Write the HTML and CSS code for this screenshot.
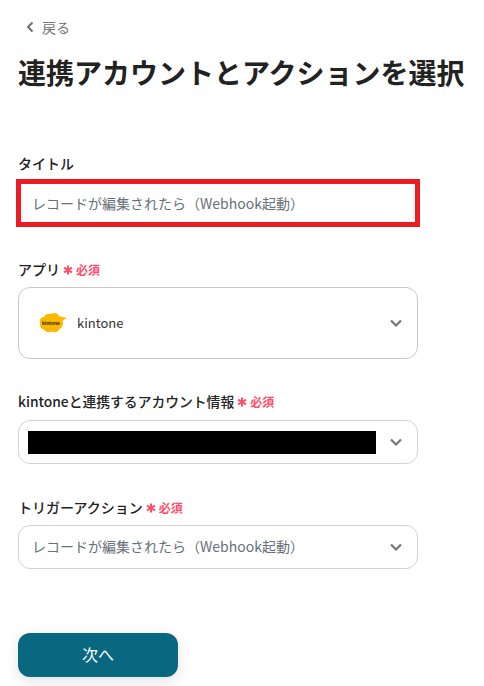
FILE: index.html
```html
<!DOCTYPE html>
<html lang="ja">
<head>
    <meta charset="UTF-8">
    <title>連携アカウントとアクションを選択</title>
    <link rel="stylesheet" href="styles.css">
</head>
<body>
    <div id='wrap'>
        <a class='back'>
            <svg class='back-icon' width="10" height="12" viewBox="0 0 10 12"><path d="M7.5 1.5L3 6l4.500 4.500" fill="none" stroke="#6f6f6f" stroke-width="2"/></svg>
            <span>戻る</span>
        </a>
        <h1 class='page-title'>連携アカウントとアクションを選択</h1>

        <div class='field field-title'>
            <div class='label'>タイトル</div>
            <div class='title-box'>レコードが編集されたら（Webhook起動）</div>
        </div>

        <div class='field field-app'>
            <div class='label'>アプリ
                <svg class='req-mark' width="10" height="10" viewBox="0 0 10 10"><path d="M5 .5v9M1 2.700L9 7.300M9 2.700L1 7.300" stroke="#ff4d6d" stroke-width="2"/></svg>
                <span class='req'>必須</span>
            </div>
            <div class='select select-app'>
                <svg class='logo' width="28" height="22" viewBox="0 0 28 22">
                    <path d="M1 11C0 8 2 5 5 5C6 2 10 1 12 2C15 0 19 1 20 4C22 4.500 25 5.500 28 6C26 7 24.500 8 23.500 9C25 12 23 16 21 16.500C20 20 15 21 13 19.500C10 21 6 20 5 17.500C2 17 0.500 13.500 1 11Z" fill="#fdb900"/>
                    <text x="3" y="12.500" class='logo-text'>kintone</text>
                </svg>
                <span class='select-text dark'>kintone</span>
                <svg class='chevron' width="14" height="10" viewBox="0 0 14 10"><path d="M2 2.500L7 7.500L12 2.500" fill="none" stroke="#757575" stroke-width="2.200"/></svg>
            </div>
        </div>

        <div class='field field-account'>
            <div class='label label-account'>kintoneと連携するアカウント情報
                <svg class='req-mark' width="10" height="10" viewBox="0 0 10 10"><path d="M5 .5v9M1 2.700L9 7.300M9 2.700L1 7.300" stroke="#ff4d6d" stroke-width="2"/></svg>
                <span class='req'>必須</span>
            </div>
            <div class='select select-account'>
                <div class='masked'></div>
                <svg class='chevron' width="14" height="10" viewBox="0 0 14 10"><path d="M2 2.500L7 7.500L12 2.500" fill="none" stroke="#757575" stroke-width="2.200"/></svg>
            </div>
        </div>

        <div class='field field-action'>
            <div class='label'>トリガーアクション
                <svg class='req-mark' width="10" height="10" viewBox="0 0 10 10"><path d="M5 .5v9M1 2.700L9 7.300M9 2.700L1 7.300" stroke="#ff4d6d" stroke-width="2"/></svg>
                <span class='req'>必須</span>
            </div>
            <div class='select select-action'>
                <span class='select-text'>レコードが編集されたら（Webhook起動）</span>
                <svg class='chevron' width="14" height="10" viewBox="0 0 14 10"><path d="M2 2.500L7 7.500L12 2.500" fill="none" stroke="#757575" stroke-width="2.200"/></svg>
            </div>
        </div>

        <button class='next-btn'>次へ</button>
    </div>
</body>
</html>
```

FILE: styles.css
```css
html, body{
    margin: 0;
    padding: 0;
    background-color: #fff;
}
body{
    font-family: "Noto Sans CJK JP", "Noto Sans", sans-serif;
    color: #222;
}
#wrap{
    width: 484px;
    height: 686px;
    overflow: hidden;
    padding: 17px 0 0 18px;
    box-sizing: border-box;
}
.back{
    display: flex;
    align-items: center;
    gap: 7px;
    height: 20px;
    padding-left: 7px;
    font-size: 14px;
    color: #757575;
}
.page-title{
    margin: 11px 0 0;
    font-size: 28px;
    line-height: 48px;
    font-weight: 700;
    white-space: nowrap;
}
.field-title{
    margin-top: 57px;
}
.field-app{
    margin-top: 32px;
}
.field-account{
    margin-top: 32px;
}
.field-action{
    margin-top: 33px;
}
.label{
    display: flex;
    align-items: center;
    height: 20px;
    font-size: 14px;
    font-weight: 500;
    white-space: nowrap;
}
.label-account{
    font-size: 13.800px;
}
.req-mark{
    margin-left: 3px;
    margin-top: 2px;
}
.req{
    margin-left: 3px;
    font-size: 12px;
    font-weight: 700;
    color: #ff4d6d;
}
.title-box{
    width: 404px;
    height: 48px;
    margin: 6px 0 0 -2px;
    padding-left: 11px;
    box-sizing: border-box;
    border: 5px solid #ed1c24;
    display: flex;
    align-items: center;
    font-size: 14px;
    color: #666f7a;
}
.select{
    width: 400px;
    margin-top: 8px;
    box-sizing: border-box;
    border: 1px solid #cfd3da;
    border-radius: 12px;
    display: flex;
    align-items: center;
    font-size: 14px;
    color: #666f7a;
}
.select-app{
    height: 72px;
    padding-left: 20px;
    border-color: #c8c8c8;
}
.select-account{
    height: 44px;
    margin-top: 9px;
    padding-left: 9px;
}
.select-action{
    height: 44px;
    padding-left: 13px;
}
.select-text{
    margin-top: -2px;
}
.select-text.dark{
    margin-left: 10px;
    font-size: 13px;
    color: #333;
}
.chevron{
    margin-left: auto;
    margin-right: 14px;
}
.masked{
    width: 348px;
    height: 23px;
    background-color: #000;
}
.logo{
    display: block;
}
.logo-text{
    font-family: "Liberation Sans", sans-serif;
    font-size: 5px;
    font-weight: 700;
    fill: #222;
}
.next-btn{
    display: block;
    width: 160px;
    height: 44px;
    margin-top: 64px;
    padding-bottom: 3px;
    border: 0;
    border-radius: 12px;
    background-color: #096780;
    box-shadow: 0 4px 14px rgba(0,0,0,.12);
    font-family: inherit;
    font-size: 16px;
    color: #fff;
}
```
